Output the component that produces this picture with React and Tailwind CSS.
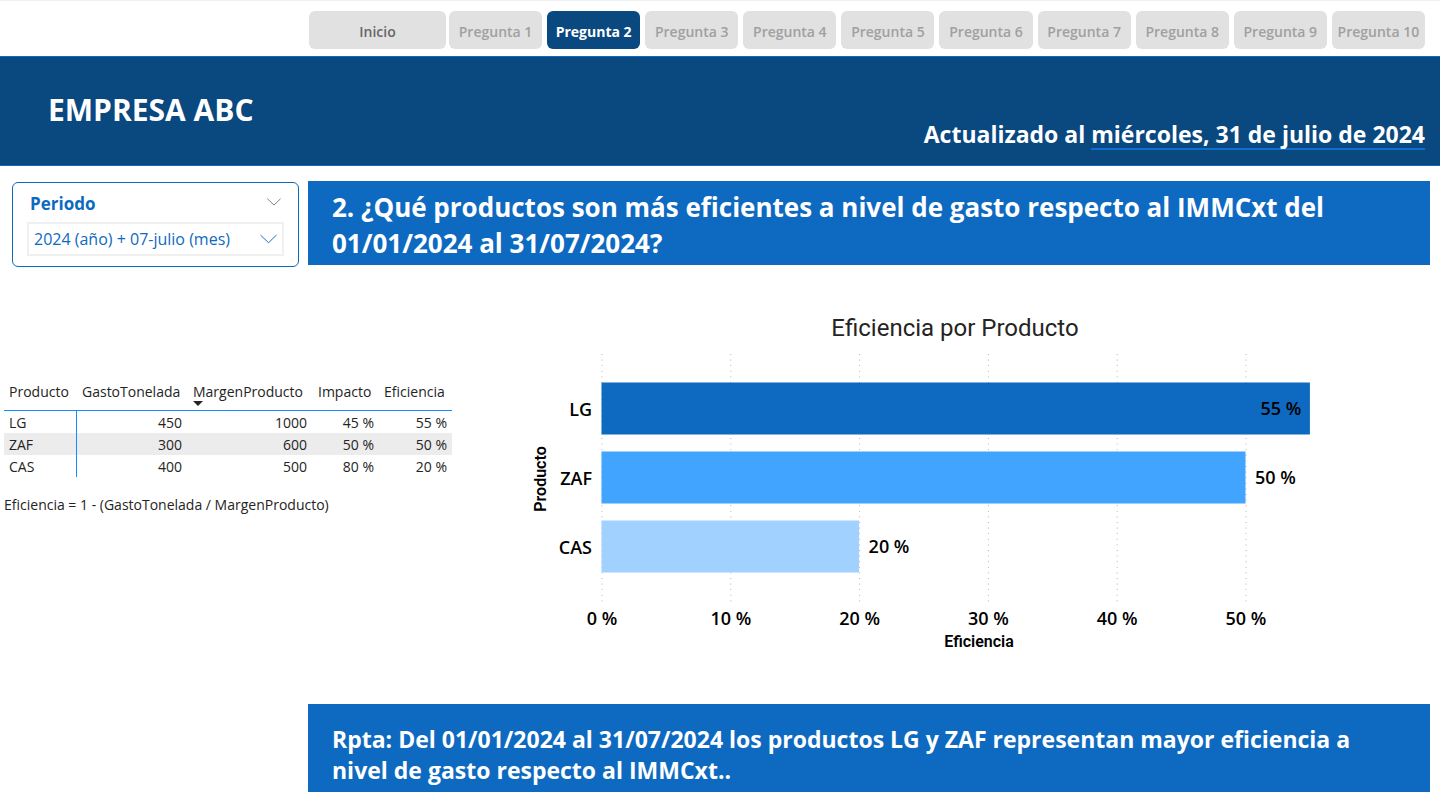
import React, { useState } from "react";

const tabs = ["1", "2", "3", "4", "5", "6", "7", "8", "9", "10"].map((n) => "Pregunta " + n);

const rows = [
  { producto: "LG", gasto: 450, margen: 1000, impacto: 45, eficiencia: 55, fill: "#0e6ac0" },
  { producto: "ZAF", gasto: 300, margen: 600, impacto: 50, eficiencia: 50, fill: "#41a4ff" },
  { producto: "CAS", gasto: 400, margen: 500, impacto: 80, eficiencia: 20, fill: "#a0d1ff" },
];

function Chevron({ className }) {
  return (
    <svg viewBox="0 0 16 9" className={className} fill="none" stroke="currentColor" strokeWidth="0.9" aria-hidden="true">
      <path d="M0.5 0.8 L8 8 L15.5 0.8" />
    </svg>
  );
}

function TopNav() {
  const [active, setActive] = useState("Pregunta 2");
  return (
    <nav className="flex h-14 gap-[3px] border-t border-[#f0f0f0] pt-[10px] pr-[15px] pb-[7px] pl-[309px] text-[14px] font-semibold">
      <button type="button" className="w-[137px] rounded-md bg-[#e1e1e1] pt-[3px] text-[#666666]">
        Inicio
      </button>
      <div className="flex flex-1 gap-[5px]">
        {tabs.map((t) => (
          <button
            key={t}
            type="button"
            onClick={() => setActive(t)}
            className={
              t === active
                ? "flex-1 basis-0 rounded-md bg-[#0a4880] pt-[3px] font-bold whitespace-nowrap text-white"
                : "flex-1 basis-0 rounded-md bg-[#e1e1e1] pt-[3px] whitespace-nowrap text-[#a0a0a0]"
            }
          >
            {t}
          </button>
        ))}
      </div>
    </nav>
  );
}

function Banner() {
  return (
    <header className="flex h-[110px] justify-between border-y border-[#0e6ac0] bg-[#0a4880] pr-[15px] pl-12 font-bold text-white">
      <h1 className="pt-[33px] text-[30px] leading-10">EMPRESA ABC</h1>
      <p className="pt-[63px] text-[23px] leading-7">
        Actualizado al <span className="inline-block border-b-2 border-[#0f6fd0]">miércoles, 31 de julio de 2024</span>
      </p>
    </header>
  );
}

function PeriodFilter() {
  return (
    <section className="mt-px mb-[-2px] w-[287px] rounded-md border border-[#0e6ac0] px-[14px] pt-[9px] text-[#0e6ac0]">
      <div className="flex items-center justify-between pr-[3px] pl-[3px]">
        <label htmlFor="periodo" className="text-[17px] leading-6 font-bold">
          Periodo
        </label>
        <button type="button" aria-label="Contraer" className="pb-1 text-[#4a5f78]">
          <Chevron className="h-2 w-[14px]" />
        </button>
      </div>
      <div className="mt-[6px] grid items-center border-2 border-[#f0f0f0]">
        <select
          id="periodo"
          className="col-start-1 row-start-1 h-[30px] w-full appearance-none bg-transparent pl-[5px] text-[16px]"
        >
          <option>2024 (año) + 07-julio (mes)</option>
        </select>
        <Chevron className="pointer-events-none col-start-1 row-start-1 mr-[5px] h-[10px] w-[17px] justify-self-end" />
      </div>
    </section>
  );
}

function DataTable() {
  return (
    <table className="ml-1 w-[448px] table-fixed border-separate border-spacing-0 text-[14px] text-[#252423]">
      <colgroup>
        <col className="w-[73px]" />
        <col className="w-[111px]" />
        <col className="w-[125px]" />
        <col className="w-[66px]" />
        <col className="w-[73px]" />
      </colgroup>
      <thead>
        <tr className="h-[29px] align-top leading-5">
          <th className="border-b border-[#118dff] pl-[5px] text-left font-normal">Producto</th>
          <th className="border-b border-[#118dff] pl-[5px] text-left font-normal">GastoTonelada</th>
          <th className="border-b border-[#118dff] pl-[5px] text-left font-normal">
            MargenProducto
            <svg viewBox="0 0 10 5" className="mt-[-1px] h-[5px] w-[10px]" fill="#252423" aria-hidden="true">
              <path d="M0 0 H10 L5 5 Z" />
            </svg>
          </th>
          <th className="border-b border-[#118dff] pl-[5px] text-left font-normal">Impacto</th>
          <th className="border-b border-[#118dff] pl-[5px] text-left font-normal">Eficiencia</th>
        </tr>
      </thead>
      <tbody className="text-right leading-[21px]">
        {rows.map((r) => (
          <tr key={r.producto} className="h-[22px] even:bg-[#ececec]">
            <td className="border-r border-[#118dff] pl-[5px] text-left">{r.producto}</td>
            <td className="pr-[6px]">{r.gasto}</td>
            <td className="pr-[6px]">{r.margen}</td>
            <td className="pr-[5px]">{r.impacto} %</td>
            <td className="pr-[5px]">{r.eficiencia} %</td>
          </tr>
        ))}
      </tbody>
    </table>
  );
}

function EfficiencyChart() {
  const x0 = 122;
  const step = 129;
  const x = (v) => x0 + (v * step) / 10 - v * 0.02;
  return (
    <svg viewBox="0 0 950 360" className="block h-auto w-full" role="img" aria-label="Eficiencia por Producto">
      <text x="475" y="36" textAnchor="middle" fontSize="24" fill="#252423" className="font-['Roboto',sans-serif]">
        Eficiencia por Producto
      </text>
      {[0, 10, 20, 30, 40, 50].map((v) => (
        <g key={v}>
          <line x1={x(v)} x2={x(v)} y1="54" y2="304" stroke="#b4b4b4" strokeDasharray="1 4.6" />
          <text x={x(v)} y="325" textAnchor="middle" fontSize="18" fontWeight="600">
            {v} %
          </text>
        </g>
      ))}
      {rows.map((r, i) => {
        const y = 82 + i * 69;
        const inside = r.eficiencia > 52;
        return (
          <g key={r.producto}>
            <rect x={x0 - 0.5} y={y + 0.5} width={x(r.eficiencia) - x0} height="52" fill={r.fill} />
            <text x="112" y={y + 34} textAnchor="end" fontSize="18" fontWeight="600">
              {r.producto}
            </text>
            <text
              x={inside ? x(r.eficiencia) - 9 : x(r.eficiencia) + 9}
              y={y + 33}
              textAnchor={inside ? "end" : "start"}
              fontSize="18"
              fontWeight="600"
            >
              {r.eficiencia} %
            </text>
          </g>
        );
      })}
      <text
        transform="translate(66 179) rotate(-90)"
        textAnchor="middle"
        fontSize="16"
        fontWeight="600"
        className="font-['Roboto',sans-serif]"
      >
        Producto
      </text>
      <text x="499" y="347" textAnchor="middle" fontSize="16" fontWeight="600" className="font-['Roboto',sans-serif]">
        Eficiencia
      </text>
    </svg>
  );
}

export default function App() {
  return (
    <div className="min-h-screen bg-white pb-4 font-['Open_Sans','Noto_Sans',sans-serif]">
      <TopNav />
      <Banner />
      <main>
        <div className="flex gap-[9px] pt-[15px] pr-[10px] pl-3">
          <PeriodFilter />
          <h2 className="flex-1 bg-[#0e6ac0] px-6 pt-2 pb-1 text-[26px] leading-9 font-bold text-white">
            2. ¿Qué productos son más eficientes a nivel de gasto respecto al IMMCxt del
            <br />
            01/01/2024 al 31/07/2024?
          </h2>
        </div>
        <div className="flex pt-[35px] pr-[10px]">
          <section className="w-[480px] shrink-0 pt-[82px]">
            <DataTable />
            <p className="mt-[18px] pl-1 text-[14px] leading-5 text-[#252423]">
              Eficiencia = 1 - (GastoTonelada / MargenProducto)
            </p>
          </section>
          <section className="min-w-0 flex-1">
            <EfficiencyChart />
          </section>
        </div>
        <p className="mt-11 mr-[10px] ml-[308px] bg-[#0e6ac0] pt-5 pr-10 pb-[6px] pl-6 text-[23px] leading-[31px] font-bold text-white">
          Rpta: Del 01/01/2024 al 31/07/2024 los productos LG y ZAF representan mayor eficiencia a nivel de gasto
          respecto al IMMCxt..
        </p>
      </main>
    </div>
  );
}
